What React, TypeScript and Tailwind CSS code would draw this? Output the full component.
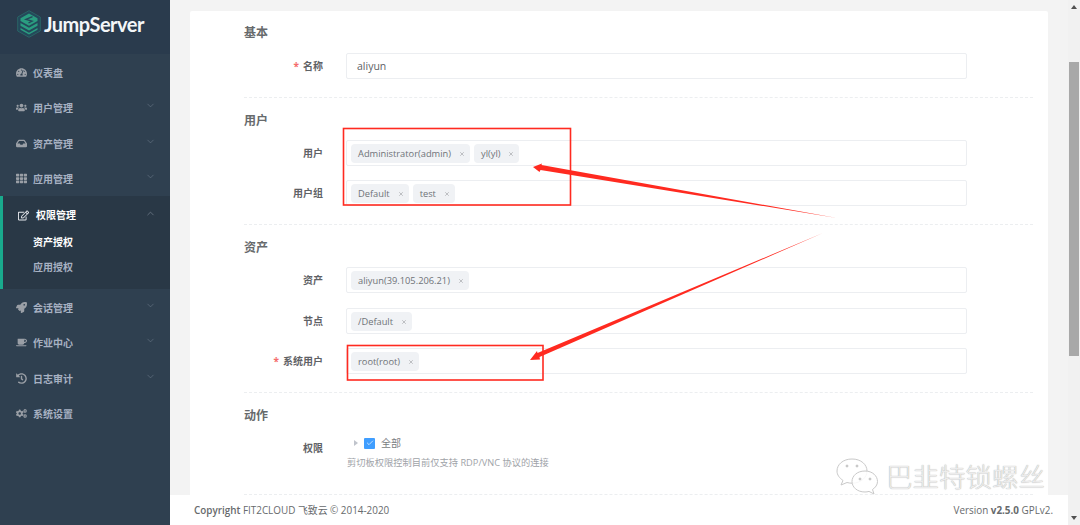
import { FaTachometerAlt, FaUsers, FaInbox, FaTh, FaRegEdit, FaRocket, FaCoffee, FaHistory, FaCogs } from "react-icons/fa";
import { ChevronDown, ChevronUp, Check, X } from "lucide-react";
import type { ReactNode } from "react";

const font = "font-['Open_Sans','Noto_Sans_CJK_SC',sans-serif]";

function NavItem({ icon, label, chevron }: { icon: ReactNode; label: string; chevron?: boolean }) {
  return (
    <div className="flex h-[35.5px] items-center pl-[15px] pr-[14px] pt-[3px] text-[#a7b1c2]">
      <span className="-mt-[2px] flex w-[12px] justify-center text-[11px] text-[#9a9fa6]">{icon}</span>
      <span className="ml-[6px] text-[10px] font-semibold">{label}</span>
      {chevron && <ChevronDown className="ml-auto mb-[6px] text-[#6f7f8e]" size={11} strokeWidth={1.2} />}
    </div>
  );
}

function Logo() {
  return (
    <svg width="24" height="28" viewBox="0 0 24 28">
      <path d="M12 0.7 L23.3 7 V21 L12 27.3 L0.7 21 V7 Z" fill="#24485a" stroke="#2a6466" strokeWidth="1" />
      <path d="M12 3.5 L20.5 8.2 V11 L12 15.7 L3.5 11 V8.2 Z" fill="#2a9d80" />
      <path d="M3.5 13 L12 17.7 L20.5 13 V15.8 L12 20.5 L3.5 15.8 Z" fill="#2a9d80" />
      <path d="M3.5 18 L12 22.7 L20.5 18 V19.8 L12 24.5 L3.5 19.8 Z" fill="#2a9d80" />
      <path d="M15.5 6.6 L9 9.4 L15 11.2 L11.5 13" fill="none" stroke="#24485a" strokeWidth="1.4" />
    </svg>
  );
}

function Sidebar() {
  return (
    <aside className="flex h-full w-[170px] shrink-0 flex-col bg-[#2f4050]">
      <div className="flex h-[54px] items-center gap-[3px] bg-[#2a3b4d] pb-[6px] pl-[17px]">
        <Logo />
        <span className="font-['Lato',sans-serif] text-[20px] font-bold leading-none tracking-[-0.5px] text-[#f3f6f8]">JumpServer</span>
      </div>
      <nav className="flex flex-1 flex-col">
        <NavItem icon={<FaTachometerAlt />} label="仪表盘" />
        <NavItem icon={<FaUsers />} label="用户管理" chevron />
        <NavItem icon={<FaInbox />} label="资产管理" chevron />
        <NavItem icon={<FaTh />} label="应用管理" chevron />
        <div className="flex h-[93px] flex-col border-l-[3px] border-[#19aa8d] bg-[#293846]">
          <div className="flex h-[38px] shrink-0 items-center pl-[15px] pr-[14px] text-white">
            <FaRegEdit className="text-[11px] text-[#e6e9ee]" />
            <span className="ml-[7px] text-[10px] font-bold">权限管理</span>
            <ChevronUp className="ml-auto mb-[4px] text-[#8b97a5]" size={11} strokeWidth={1.2} />
          </div>
          <div className="-mt-[4px] flex h-[25px] shrink-0 items-center pl-[30px] text-[10px] font-bold text-white">资产授权</div>
          <div className="flex h-[25px] shrink-0 items-center pl-[30px] text-[10px] font-semibold text-[#a7b1c2]">应用授权</div>
        </div>
        <NavItem icon={<FaRocket />} label="会话管理" chevron />
        <NavItem icon={<FaCoffee />} label="作业中心" chevron />
        <NavItem icon={<FaHistory />} label="日志审计" chevron />
        <NavItem icon={<FaCogs />} label="系统设置" />
      </nav>
    </aside>
  );
}

function Tag({ text }: { text: string }) {
  return (
    <span className="flex h-[19px] items-center gap-[8px] rounded-[4px] bg-[#f0f2f5] pl-[7px] pr-[5px] pt-[1px] text-[9.3px] text-[#6f7278]">
      {text}
      <X size={6} strokeWidth={2} className="text-[#8b8d91]" />
    </span>
  );
}

function Field({ label, required, tags, value, mt }: { label: string; required?: boolean; tags?: string[]; value?: string; mt: string }) {
  return (
    <div className={`flex h-[26px] items-center ${mt}`}>
      <div className="flex w-[133px] justify-end text-[10px] font-bold text-[#5f6266]">
        {required && <span className="mr-[4px] text-[#f56c6c]">*</span>}
        {label}
      </div>
      <div className="ml-[23px] flex h-[26px] w-[621px] items-center gap-[4px] rounded-[2px] border border-[#eceef1] pl-[4px]">
        {tags?.map((t) => <Tag key={t} text={t} />)}
        {value && <span className="pl-[6px] pt-[1px] text-[10.5px] text-[#606266]">{value}</span>}
      </div>
    </div>
  );
}

function SectionTitle({ text, mt }: { text: string; mt: string }) {
  return <div className={`h-[16px] pl-[54px] text-[12px] font-semibold leading-[16px] text-[#676a6c] ${mt}`}>{text}</div>;
}

function Divider({ mt }: { mt: string }) {
  return <div className={`ml-[54px] mr-[15px] border-t border-dashed border-[#eceef0] ${mt}`} />;
}

function Content() {
  return (
    <main className="relative flex h-full flex-1 flex-col bg-[#f3f3f3]">
      <div className="flex-1 overflow-hidden px-[20px] pt-[11px]">
        <div className="h-[500px] w-[858px] rounded-[2px] bg-white pt-[14px]">
          <SectionTitle text="基本" mt="" />
          <Field label="名称" required value="aliyun" mt="mt-[12px]" />
          <Divider mt="mt-[18px]" />
          <SectionTitle text="用户" mt="mt-[15px]" />
          <Field label="用户" tags={["Administrator(admin)", "yl(yl)"]} mt="mt-[11px]" />
          <Field label="用户组" tags={["Default", "test"]} mt="mt-[14px]" />
          <Divider mt="mt-[18px]" />
          <SectionTitle text="资产" mt="mt-[15px]" />
          <Field label="资产" tags={["aliyun(39.105.206.21)"]} mt="mt-[11px]" />
          <Field label="节点" tags={["/Default"]} mt="mt-[15px]" />
          <Field label="系统用户" required tags={["root(root)"]} mt="mt-[14px]" />
          <Divider mt="mt-[18px]" />
          <SectionTitle text="动作" mt="mt-[15px]" />
          <div className="mt-[11px] flex">
            <div className="flex h-[21px] w-[133px] items-end justify-end text-[10px] font-bold text-[#5f6266]">权限</div>
            <div className="ml-[23px] flex flex-col">
              <div className="flex h-[16px] items-center">
                <span className="ml-[8px] h-0 w-0 border-y-[3.5px] border-l-[4px] border-y-transparent border-l-[#c0c4cc]" />
                <span className="ml-[6px] flex h-[11px] w-[11px] items-center justify-center rounded-[1px] bg-[#409eff]">
                  <Check size={8} strokeWidth={2} className="text-white" />
                </span>
                <span className="ml-[6px] text-[10px] text-[#7a7d82]">全部</span>
              </div>
              <div className="ml-[1px] mt-[6px] text-[9.25px] leading-[12px] text-[#a0a3a8]">剪切板权限控制目前仅支持 RDP/VNC 协议的连接</div>
            </div>
          </div>
          <Divider mt="mt-[25px]" />
        </div>
      </div>
      <footer className="flex h-[30px] items-center justify-between bg-white pl-[24px] pr-[15px] pt-[1px] text-[9.9px] text-[#676a6c]">
        <span><b className="font-semibold">Copyright</b> FIT2CLOUD 飞致云 © 2014-2020</span>
        <span>Version <b className="font-bold">v2.5.0</b> GPLv2.</span>
      </footer>
    </main>
  );
}

function Scrollbar() {
  return (
    <div className="flex h-full w-[12px] shrink-0 flex-col items-center bg-[#f1f1f1]">
      <span className="mt-[5px] h-0 w-0 border-x-[3.5px] border-b-[4px] border-x-transparent border-b-[#505050]" />
      <div className="mt-[53px] h-[294px] w-[10px] bg-[#a8a8a8]" />
      <span className="mt-auto mb-[5px] h-0 w-0 border-x-[3.5px] border-t-[4px] border-x-transparent border-t-[#505050]" />
    </div>
  );
}

function Annotations() {
  return (
    <svg className="pointer-events-none absolute left-0 top-0" width="1080" height="525" viewBox="0 0 1080 525">
      <rect x="343.5" y="128.5" width="227" height="76.5" fill="none" stroke="#ff2a20" strokeWidth="1.6" />
      <rect x="347.5" y="345.5" width="195.5" height="34.5" fill="none" stroke="#ff2a20" strokeWidth="1.6" />
      <path d="M533 167 L542 163.5 L541.5 165 L837 218 L540.5 170 L539.5 172 Z" fill="#ff2a20" />
      <path d="M530 360 L537 351 L537.5 353 L823 233 L539.5 357 L540 359.5 Z" fill="#ff2a20" />
    </svg>
  );
}

function Watermark() {
  return (
    <div className="pointer-events-none absolute left-[835px] top-[457px] flex items-center gap-[7px]">
      <svg width="44" height="40" viewBox="0 0 44 40" fill="rgba(255,255,255,0.85)" stroke="#c9c9c9" strokeWidth="1">
        <path d="M17 2 C8 2 2 7.5 2 14 C2 18 4.5 21 8 23.5 L6 28 L12 25.5 C14 26 15.5 26.2 17 26.2 C26 26.2 32 20.5 32 14 C32 7.5 26 2 17 2 Z" />
        <path d="M30 14 C22 14 17 19 17 24.5 C17 30 22 35 30 35 C31.5 35 32.5 34.8 34 34.4 L39 37 L37.5 32.5 C40.5 30.5 42.5 27.8 42.5 24.5 C42.5 19 37.5 14 30 14 Z" />
        <circle cx="12" cy="9" r="1" fill="#bbb" />
        <circle cx="22" cy="9" r="1" fill="#bbb" />
        <circle cx="25" cy="22" r="1" fill="#bbb" />
        <circle cx="35" cy="22" r="1" fill="#bbb" />
      </svg>
      <span className="text-[26.5px] font-light leading-none text-[#ececec] [text-shadow:0_0_1px_#999]">巴韭特锁螺丝</span>
    </div>
  );
}

export default function App() {
  return (
    <div className={`relative flex h-[525px] w-[1080px] overflow-hidden ${font}`}>
      <Sidebar />
      <Content />
      <Scrollbar />
      <Annotations />
      <Watermark />
    </div>
  );
}
